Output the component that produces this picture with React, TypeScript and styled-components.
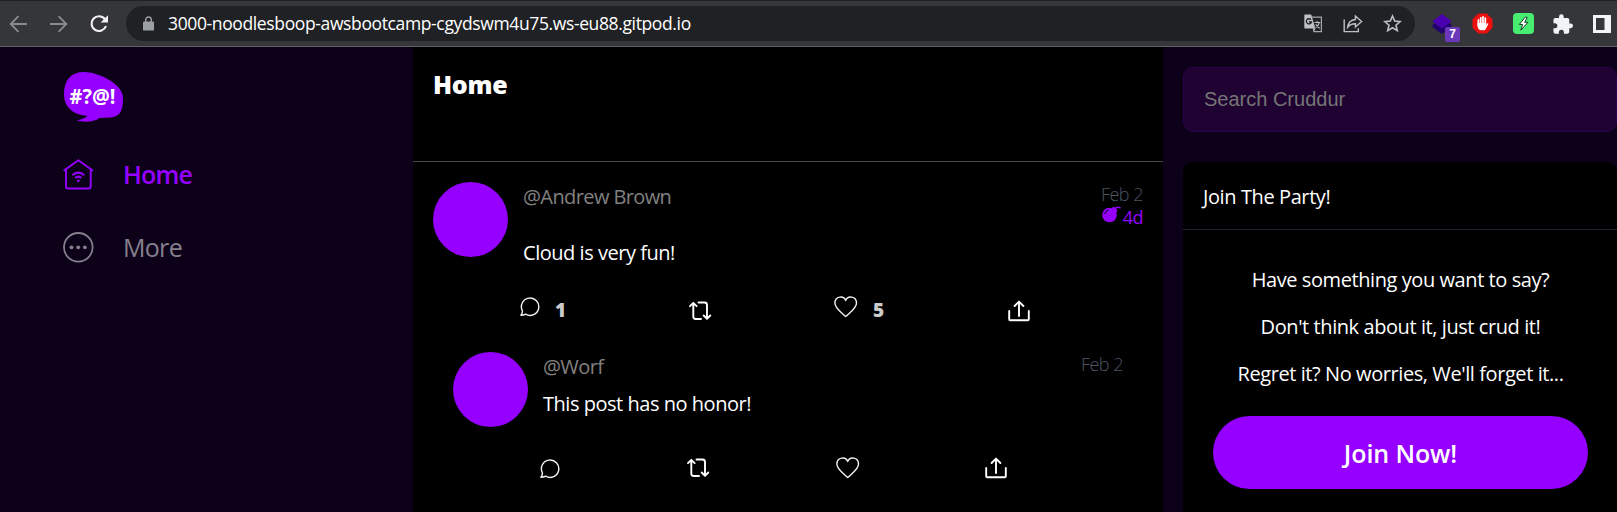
import React from "react";
import styled, { createGlobalStyle } from "styled-components";

const PURPLE = "#9500ff";

const GlobalStyle = createGlobalStyle`
  * { box-sizing: border-box; }
  body {
    margin: 0;
    background: #0d011a;
    color: #fff;
    font-family: "Segoe UI", "Open Sans", "Noto Sans", sans-serif;
    overflow: hidden;
  }
  svg { display: block; flex: none; }
`;

const Screen = styled.div`
  width: 1617px;
  height: 512px;
  display: flex;
  flex-direction: column;
  overflow: hidden;
`;

/* ---------- browser toolbar ---------- */
const Toolbar = styled.header`
  height: 47px;
  flex: none;
  display: flex;
  align-items: center;
  background: #35363a;
  border-top: 1px solid #202124;
  border-bottom: 1px solid #5e5f62;
  padding: 0 6px 0 9px;
`;
const NavButtons = styled.div`
  display: flex;
  gap: 20px;
  width: 117px;
`;
const AddressBar = styled.div`
  width: 1289px;
  height: 35px;
  border-radius: 18px;
  background: #202124;
  display: flex;
  align-items: center;
  padding: 0 13px 0 17px;
`;
const Url = styled.span`
  flex: 1;
  margin-left: 14px;
  padding-bottom: 1px;
  font-size: 17.5px;
  line-height: 34px;
  letter-spacing: -0.37px;
  white-space: nowrap;
`;
const AddressIcons = styled.div`
  display: flex;
  align-items: center;
  gap: 20px;
`;
const Extensions = styled.div`
  display: flex;
  align-items: center;
  gap: 19.75px;
  margin-left: 17px;
`;
const BadgedIcon = styled.div`
  position: relative;
`;
const Badge = styled.span`
  position: absolute;
  left: 13px;
  top: 13px;
  width: 15px;
  height: 15px;
  border-radius: 2px;
  background: #6b38bb;
  font: bold 12px/15px "Liberation Sans", sans-serif;
  text-align: center;
`;

/* ---------- page ---------- */
const Page = styled.div`
  flex: 1;
  display: flex;
  min-height: 0;
`;
const Sidebar = styled.nav`
  width: 413px;
  flex: none;
  padding: 24px 0 0 63px;
`;
const LogoBox = styled.div`
  height: 67px;
`;
const NavItem = styled.a<{ $active?: boolean }>`
  height: 73px;
  display: flex;
  align-items: center;
  gap: 29px;
  color: ${(p) => (p.$active ? PURPLE : "#85808c")};
  font-size: 25px;
  line-height: 34px;
  font-weight: ${(p) => (p.$active ? 600 : 400)};
  letter-spacing: ${(p) => (p.$active ? "-0.8px" : "-0.7px")};
`;
const NavLabel = styled.span`
  padding-bottom: 2px;
`;
const Feed = styled.main`
  width: 750px;
  flex: none;
  background: #000;
`;
const FeedHeader = styled.div`
  height: 115px;
  border-bottom: 1px solid #47474d;
  padding: 20px 20px 0;
`;
const FeedTitle = styled.h1`
  margin: 0;
  font-size: 25px;
  line-height: 34px;
  font-weight: 800;
  letter-spacing: -0.3px;
`;
const Post = styled.article<{ $reply?: boolean }>`
  padding: ${(p) => (p.$reply ? "26px 40px 0" : "20px 20px 0")};
`;
const PostTop = styled.div<{ $height: number }>`
  display: flex;
  height: ${(p) => p.$height}px;
`;
const Avatar = styled.div`
  width: 75px;
  height: 75px;
  flex: none;
  border-radius: 50%;
  background: ${PURPLE};
`;
const PostBody = styled.div<{ $gap: number }>`
  flex: 1;
  margin-left: 15px;
  padding-top: 1px;
  display: flex;
  flex-direction: column;
  gap: ${(p) => p.$gap}px;
`;
const Handle = styled.div`
  font-size: 20px;
  line-height: 28px;
  color: #808080;
  letter-spacing: -0.6px;
`;
const Message = styled.div`
  font-size: 20px;
  line-height: 28px;
  letter-spacing: -0.47px;
`;
const PostMeta = styled.div`
  display: flex;
  flex-direction: column;
  align-items: flex-end;
  padding-top: 1px;
  font-size: 18px;
  line-height: 23px;
  font-weight: 300;
  letter-spacing: -0.5px;
  color: #4d5563;
`;
const Expiry = styled.div`
  display: flex;
  gap: 2px;
  color: ${PURPLE};
  font-weight: 400;
`;
const Actions = styled.div<{ $columns: string }>`
  display: grid;
  grid-template-columns: ${(p) => p.$columns};
  height: 30px;
  margin-left: 87px;
`;
const Action = styled.div<{ $counted?: boolean }>`
  display: flex;
  align-items: ${(p) => (p.$counted ? "flex-start" : "center")};
  gap: 15px;
`;
const Count = styled.span`
  font-size: 19px;
  line-height: 28px;
  font-weight: 800;
  color: #ccc;
`;
const Aside = styled.aside`
  flex: 1;
  padding: 20px 0 0 20px;
`;
const Search = styled.input`
  display: block;
  width: 434px;
  height: 65px;
  margin: 0 0 30px;
  padding: 0 20px;
  border: 1px solid #28014a;
  border-radius: 10px;
  background: #1f0232;
  font: 20px "Liberation Sans", Arial, sans-serif;
  &::placeholder { color: #757575; opacity: 1; }
`;
const Card = styled.section`
  width: 434px;
  height: 400px;
  border-radius: 10px;
  background: #000;
`;
const CardTitle = styled.h2`
  margin: 0;
  height: 68px;
  padding: 21px 20px 0;
  border-bottom: 1px solid #1f2130;
  font-size: 20px;
  line-height: 28px;
  font-weight: 400;
  letter-spacing: -0.4px;
`;
const CardBody = styled.div`
  padding: 36px 29px 0 30px;
  text-align: center;
`;
const Line = styled.p`
  margin: 0 0 19px;
  font-size: 20px;
  line-height: 28px;
  letter-spacing: -0.42px;
  white-space: nowrap;
`;
const JoinButton = styled.button`
  display: block;
  width: 100%;
  height: 73px;
  margin-top: 28px;
  border: 0;
  border-radius: 37px;
  background: ${PURPLE};
  color: #fff;
  font: 600 25px/34px "Segoe UI", "Open Sans", sans-serif;
  letter-spacing: -0.1px;
`;

/* ---------- icons ---------- */
const ArrowIcon = ({ flip }: { flip?: boolean }) => (
  <svg width="20" height="20" viewBox="0 0 20 20" fill="none" stroke="#8a8b8e" strokeWidth="1.8">
    <path d={flip ? "M1 10H17M9.5 2.2L17.3 10L9.5 17.8" : "M18 10H2M9.5 2.2L1.7 10L9.5 17.8"} />
  </svg>
);
const ReloadIcon = () => (
  <svg width="20" height="20" viewBox="0 0 20 20" fill="none" stroke="#f1f1f2" strokeWidth="2.1">
    <path d="M15.8 5A7.4 7.4 0 1 0 17 12" />
    <path d="M19 1.2V8.6H11.6Z" fill="#f1f1f2" stroke="none" />
  </svg>
);
const LockIcon = () => (
  <svg width="11" height="15" viewBox="0 0 11 15">
    <path d="M2.7 7V3.8a2.8 2.8 0 0 1 5.6 0V7" fill="none" stroke="#9aa0a6" strokeWidth="1.4" />
    <rect y="5.6" width="11" height="9" rx="1.2" fill="#9aa0a6" />
  </svg>
);
const TranslateIcon = () => (
  <svg width="19" height="19" viewBox="0 0 19 19">
    <path d="M8 3.2H17.4V17.6H9.5" fill="none" stroke="#a5a6a8" strokeWidth="1.2" />
    <path d="M1 0.6H7.2L11.4 14.4H1Q0.3 14.4 0.3 13.4V1.4Q0.3 0.6 1 0.6Z" fill="#bdc1c6" />
    <path d="M8.7 14.4H11.6L9.7 18Z" fill="#bdc1c6" />
    <path d="M7 5.7A2.6 2.6 0 1 0 7.5 8H5" fill="none" stroke="#202124" strokeWidth="1.3" />
    <path d="M10.5 8.5H16.3M13.2 7V8.5M15.3 8.6Q14.5 11.6 11.7 13.6M11.7 10.2Q13 12.6 15.7 14.3" fill="none" stroke="#bdc1c6" strokeWidth="1.1" />
  </svg>
);
const ShareOutIcon = () => (
  <svg width="20" height="19" viewBox="0 0 20 19" fill="none" stroke="#bdc1c6" strokeWidth="1.4">
    <path d="M1.2 5.5V17.6H15.3V14.2" />
    <path d="M4.7 13.2Q5.5 6.2 12.4 5.5V2L18.6 7.6L12.4 13V9.8Q7.5 9.7 4.7 13.2Z" />
  </svg>
);
const StarIcon = () => (
  <svg width="19" height="19" viewBox="0 0 19 19" fill="none" stroke="#bdc1c6" strokeWidth="1.6">
    <path d="M9.5 2L11.7 7.1L17.2 7.6L13 11.2L14.3 16.7L9.5 13.8L4.7 16.7L6 11.2L1.8 7.6L7.3 7.1Z" />
  </svg>
);
const CubeIcon = () => (
  <svg width="20" height="20" viewBox="0 0 20 20">
    <path d="M0.5 11V13L10 20L19.5 13V11L17 9L10 14L3 9Z" fill="#23006f" />
    <path d="M10 0L19.700 7.300L10 14.600L0.300 7.300Z" fill="#4a00b0" />
  </svg>
);
const BlockIcon = () => (
  <svg width="21" height="21" viewBox="0 0 21 21">
    <path d="M6.3 0.5H14.7L20.5 6.3V14.7L14.7 20.5H6.3L0.5 14.7V6.3Z" fill="#ee0f0f" />
    <path d="M6.4 7V12M8.7 4.8V11M11 4V11M13.3 5.2V11" stroke="#fff" strokeWidth="1.8" strokeLinecap="round" />
    <path d="M5.5 10H14.2V12L15.4 10.3Q16.6 10 16.2 11.2L13.8 16Q13 17.3 11 17.3H9Q6.4 17 5.5 13.5Z" fill="#fff" />
  </svg>
);
const BoltIcon = () => (
  <svg width="21" height="21" viewBox="0 0 21 21">
    <rect width="21" height="21" rx="4" fill="#47ed70" />
    <path d="M12.300 4L6.300 11.500H9.600L7.800 17.200L15 9.300H11.700L14.200 4.300Z" fill="#fff" stroke="#1e3b2a" strokeWidth="1" />
  </svg>
);
const PuzzleIcon = () => (
  <svg width="20" height="20" viewBox="1.5 0.8 21.5 21.5" fill="#f1f3f4">
    <path d="M20.5 11H19V7c0-1.1-.9-2-2-2h-4V3.500a2.500 2.500 0 0 0-5 0V5H4c-1.100 0-2 .9-2 2v3.800h1.500a2.700 2.700 0 0 1 0 5.400H2V20c0 1.100.9 2 2 2h3.800v-1.500a2.700 2.700 0 0 1 5.400 0V22H17c1.100 0 2-.9 2-2v-4h1.500a2.500 2.500 0 0 0 0-5z" />
  </svg>
);
const PanelIcon = () => (
  <svg width="18" height="18" viewBox="0 0 18 18">
    <path d="M0 0H18V18H0ZM3 3V15H11.500V3Z" fill="#f1f3f4" fillRule="evenodd" />
  </svg>
);
const Logo = () => (
  <svg width="61" height="52" viewBox="0 0 61 52">
    <path d="M21 1C34 1 60 12 60 27C60 38 58 46 47 46.500C43 46.800 40 46.500 36.500 47C31 51 21 51.500 13.500 49.500C18 48.800 22 47.500 24.500 44.800C10 44 1 36 1 23C1 9 8 1 21 1Z" fill={PURPLE} />
    <text x="6.500" y="33" textLength="46" lengthAdjust="spacingAndGlyphs" fill="#fff" fontFamily='"Open Sans", sans-serif' fontWeight="700" fontSize="22">
      #?@!
    </text>
  </svg>
);
const HomeIcon = () => (
  <svg width="31" height="31" viewBox="0 0 31 31" fill="none" stroke={PURPLE} strokeWidth="1.900" strokeLinejoin="round">
    <path d="M0.700 11.700L15.300 1.200L30 11.700" />
    <path d="M3 10.500V27.500Q3 29.500 5 29.500H25.700Q27.700 29.500 27.700 27.500V10.500" />
    <path d="M9.500 16.200Q15.300 11 21.200 16.200M12.200 19Q15.300 16.300 18.400 19" strokeWidth="2" />
    <circle cx="15.300" cy="21.800" r="1.400" fill={PURPLE} stroke="none" />
  </svg>
);
const MoreIcon = () => (
  <svg width="31" height="31" viewBox="0 0 31 31">
    <circle cx="15.300" cy="15.300" r="14.300" fill="none" stroke="#85808c" strokeWidth="1.800" />
    <g fill="#85808c">
      <circle cx="8.500" cy="15.300" r="1.900" />
      <circle cx="15.200" cy="15.300" r="1.900" />
      <circle cx="21.900" cy="15.300" r="1.900" />
    </g>
  </svg>
);
const BombIcon = () => (
  <svg width="19" height="17" viewBox="0 0 19 17">
    <circle cx="7.500" cy="9" r="7.300" fill={PURPLE} />
    <path d="M9.500 2L12 0.800L15.600 4.500L14 7Z" fill={PURPLE} />
    <path d="M13.500 2.500Q15.500 0.300 18.600 2.200" fill="none" stroke={PURPLE} strokeWidth="1.500" />
    <path d="M2.800 8Q3.500 4.800 6.500 4.200" fill="none" stroke="#000" strokeWidth="1" />
  </svg>
);
const ReplyIcon = () => (
  <svg width="20" height="21" viewBox="0 0 20 21" fill="none" stroke="#f2f2f2" strokeWidth="1.400" strokeLinejoin="round">
    <path d="M2.400 14.800A8.700 8.700 0 1 1 5.600 18.200Q3.500 19.400 0.900 19.300Q2.600 17.200 2.400 14.800Z" />
  </svg>
);
const RepostIcon = () => (
  <svg width="23" height="20" viewBox="0 0 23 20" fill="none" stroke="#fff" strokeWidth="1.900" strokeLinecap="round" strokeLinejoin="round">
    <path d="M4.300 2.500V15.500Q4.300 18 6.800 18H12M1 5.200L4.300 1.900L7.600 5.200" />
    <path d="M9.500 1.500H15.500Q18 1.500 18 4V17M14.700 14.500L18 17.800L21.300 14.500" />
  </svg>
);
const HeartIcon = () => (
  <svg width="24" height="22" viewBox="0 0 24 22" fill="none" stroke="#f2f2f2" strokeWidth="1.400" strokeLinejoin="round">
    <path d="M11.700 4.500C9.900 -0.500 1 -0.500 0.900 7.200C0.900 12 6.500 15.500 11.700 20.600C16.900 15.500 22.500 12 22.500 7.200C22.400 -0.500 13.500 -0.500 11.700 4.500Z" />
  </svg>
);
const ShareIcon = () => (
  <svg width="22" height="22" viewBox="0 0 22 22" fill="none" stroke="#fff" strokeWidth="1.900" strokeLinecap="round" strokeLinejoin="round">
    <path d="M1.200 11V19.300Q1.200 20.300 2.200 20.300H19.800Q20.800 20.300 20.800 19.300V11" />
    <path d="M11 16V2M6.600 6L11 1.600L15.400 6" />
  </svg>
);

type ActionBarProps = { columns: string; replies?: number; likes?: number };
const ActionBar = ({ columns, replies, likes }: ActionBarProps) => (
  <Actions $columns={columns}>
    <Action $counted={!!replies}>
      <ReplyIcon />
      {replies && <Count>{replies}</Count>}
    </Action>
    <Action><RepostIcon /></Action>
    <Action $counted={!!likes}>
      <HeartIcon />
      {likes && <Count>{likes}</Count>}
    </Action>
    <Action><ShareIcon /></Action>
  </Actions>
);

export default function App() {
  return (
    <Screen>
      <GlobalStyle />
      <Toolbar>
        <NavButtons>
          <ArrowIcon />
          <ArrowIcon flip />
          <ReloadIcon />
        </NavButtons>
        <AddressBar>
          <LockIcon />
          <Url>3000-noodlesboop-awsbootcamp-cgydswm4u75.ws-eu88.gitpod.io</Url>
          <AddressIcons>
            <TranslateIcon />
            <ShareOutIcon />
            <StarIcon />
          </AddressIcons>
        </AddressBar>
        <Extensions>
          <BadgedIcon>
            <CubeIcon />
            <Badge>7</Badge>
          </BadgedIcon>
          <BlockIcon />
          <BoltIcon />
          <PuzzleIcon />
          <PanelIcon />
        </Extensions>
      </Toolbar>
      <Page>
        <Sidebar>
          <LogoBox><Logo /></LogoBox>
          <NavItem $active><HomeIcon /><NavLabel>Home</NavLabel></NavItem>
          <NavItem><MoreIcon /><NavLabel>More</NavLabel></NavItem>
        </Sidebar>
        <Feed>
          <FeedHeader><FeedTitle>Home</FeedTitle></FeedHeader>
          <Post>
            <PostTop $height={114}>
              <Avatar />
              <PostBody $gap={28}>
                <Handle>@Andrew Brown</Handle>
                <Message>Cloud is very fun!</Message>
              </PostBody>
              <PostMeta>
                <span>Feb 2</span>
                <Expiry><BombIcon />4d</Expiry>
              </PostMeta>
            </PostTop>
            <ActionBar columns="169px 145px 174px auto" replies={1} likes={5} />
          </Post>
          <Post $reply>
            <PostTop $height={101}>
              <Avatar />
              <PostBody $gap={9}>
                <Handle>@Worf</Handle>
                <Message>This post has no honor!</Message>
              </PostBody>
              <PostMeta><span>Feb 2</span></PostMeta>
            </PostTop>
            <ActionBar columns="147px 149px 149px auto" />
          </Post>
        </Feed>
        <Aside>
          <Search placeholder="Search Cruddur" />
          <Card>
            <CardTitle>Join The Party!</CardTitle>
            <CardBody>
              <Line>Have something you want to say?</Line>
              <Line>Don't think about it, just crud it!</Line>
              <Line>Regret it? No worries, We'll forget it...</Line>
              <JoinButton>Join Now!</JoinButton>
            </CardBody>
          </Card>
        </Aside>
      </Page>
    </Screen>
  );
}
